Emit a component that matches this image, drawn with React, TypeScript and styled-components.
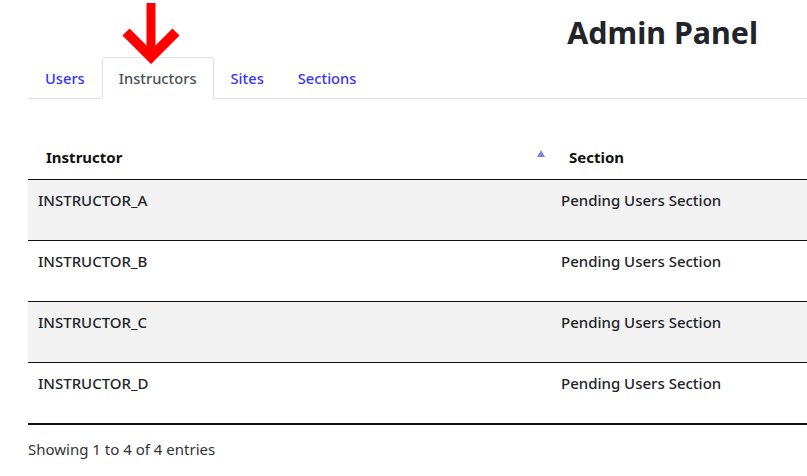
import React from "react";
import styled, { createGlobalStyle } from "styled-components";

const GlobalStyle = createGlobalStyle`
  html, body {
    margin: 0;
    padding: 0;
    background: #fff;
    overflow: hidden;
  }
  body {
    font-family: "Noto Sans", "Open Sans", sans-serif;
    color: #212529;
  }
`;

const Page = styled.div`
  position: relative;
  width: 807px;
  height: 476px;
  padding: 0 0 0 28px;
  box-sizing: border-box;
  overflow: hidden;
`;

const TitleRow = styled.div`
  display: flex;
  justify-content: flex-end;
  padding: 13px 49px 0 0;
  height: 57px;
  box-sizing: border-box;
`;

const Title = styled.h1`
  margin: 0;
  font-size: 30.4px;
  font-weight: 700;
  line-height: 40px;
  color: #212529;
`;

const Tabs = styled.ul`
  display: flex;
  list-style: none;
  margin: 0;
  padding: 0;
  border-bottom: 1px solid #dee2e6;
`;

const Tab = styled.li<{ $active?: boolean }>`
  margin-bottom: -1px;
  padding: 8px 16px;
  font-size: 14.7px;
  line-height: 24px;
  font-weight: 500;
  border: 1px solid ${(p) => (p.$active ? "#dee2e6" : "transparent")};
  border-bottom-color: ${(p) => (p.$active ? "#fff" : "transparent")};
  border-radius: 4px 4px 0 0;
  background: ${(p) => (p.$active ? "#fff" : "transparent")};
  color: ${(p) => (p.$active ? "#495057" : "#3636f0")};
`;

const Arrow = styled.svg`
  position: absolute;
  left: 121px;
  top: 0;
`;

const Table = styled.table`
  margin-top: 36px;
  width: 800px;
  border-collapse: collapse;
  font-size: 15px;
  line-height: 24px;
  border-bottom: 2px solid #111;
`;

const HeadCell = styled.th<{ $width?: number }>`
  position: relative;
  text-align: left;
  padding: 10px 18px;
  font-weight: 700;
  color: #111;
  border-bottom: 1px solid #111;
  width: ${(p) => (p.$width ? `${p.$width}px` : "auto")};
  box-sizing: border-box;
`;

const SortIcon = styled.span`
  position: absolute;
  right: 6px;
  top: 15px;
  width: 0;
  height: 0;
  border-left: 4px solid transparent;
  border-right: 4px solid transparent;
  border-bottom: 7px solid #8080e2;
`;

const Row = styled.tr<{ $odd: boolean }>`
  background: ${(p) => (p.$odd ? "#f2f2f2" : "#fff")};
`;

const Cell = styled.td`
  padding: 8px 10px;
  height: 44px;
  vertical-align: top;
  font-weight: 500;
  color: #212529;
  border-bottom: 1px solid #111;
`;

const Info = styled.div`
  margin-top: 12px;
  font-size: 15px;
  line-height: 24px;
  color: #333;
`;

const rows = ["A", "B", "C", "D"];

export default function App() {
  return (
    <>
      <GlobalStyle />
      <Page>
        <TitleRow>
          <Title>Admin Panel</Title>
        </TitleRow>
        <Tabs>
          <Tab>Users</Tab>
          <Tab $active>Instructors</Tab>
          <Tab>Sites</Tab>
          <Tab>Sections</Tab>
        </Tabs>
        <Arrow width="60" height="64" viewBox="0 0 60 64">
          <line x1="30" y1="3" x2="30" y2="54" stroke="#ff0000" strokeWidth="9" />
          <polyline
            points="5,32 30,57 55,32"
            fill="none"
            stroke="#ff0000"
            strokeWidth="10"
            strokeLinejoin="miter"
          />
        </Arrow>
        <Table>
          <thead>
            <tr>
              <HeadCell $width={523}>
                Instructor
                <SortIcon />
              </HeadCell>
              <HeadCell>Section</HeadCell>
            </tr>
          </thead>
          <tbody>
            {rows.map((r, i) => (
              <Row key={r} $odd={i % 2 === 0}>
                <Cell>INSTRUCTOR_{r}</Cell>
                <Cell>Pending Users Section</Cell>
              </Row>
            ))}
          </tbody>
        </Table>
        <Info>Showing 1 to 4 of 4 entries</Info>
      </Page>
    </>
  );
}
